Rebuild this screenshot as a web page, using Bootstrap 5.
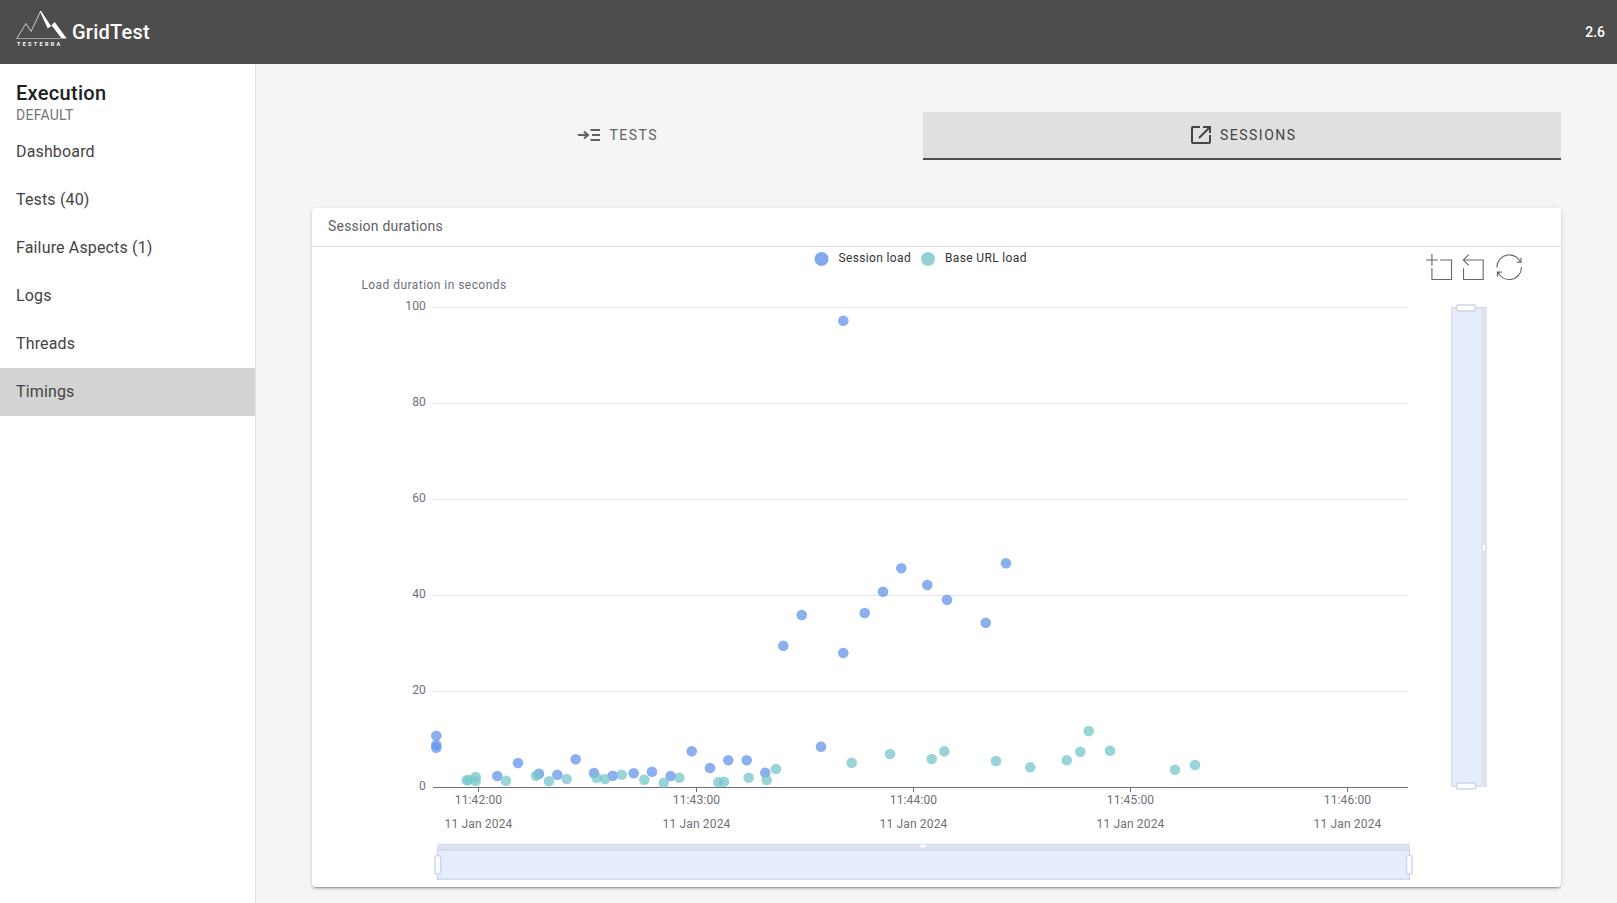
<!DOCTYPE html>
<html lang="en">
  <head>
    <meta charset="UTF-8" />
    <meta name="viewport" content="width=device-width, initial-scale=1.0" />
    <title>GridTest</title>
    <link
      rel="stylesheet"
      href="https://cdn.jsdelivr.net/npm/bootstrap@5.3.0/dist/css/bootstrap.min.css"
    />
    <style>
      body { font-family: Roboto, "Liberation Sans", sans-serif; background: #f5f5f5; height: 903px; overflow: hidden; }
      .top-bar { height: 64px; background: #4d4d4d; padding: 0 12px 0 16px; }
      .brand-name { font-size: 20px; font-weight: 500; color: #fff; line-height: 1; margin-left: 4px; letter-spacing: .25px; }
      .version-no { font-size: 14px; font-weight: 500; color: #fff; }
      .side-menu { width: 256px; background: #fff; border-right: 1px solid #e0e0e0; flex-shrink: 0; }
      .side-title { padding: 17px 16px 0; height: 64px; }
      .side-title h1 { font-size: 20px; font-weight: 500; line-height: 24px; margin: 0; color: #212121; letter-spacing: .3px; }
      .side-title div { font-size: 14px; line-height: 20px; color: #757575; letter-spacing: .25px; }
      .side-link { height: 48px; line-height: 48px; padding: 0 16px; font-size: 16px; color: #444; letter-spacing: .15px; text-decoration: none; display: block; }
      .side-link.on { background: #d3d3d3; }
      .main-area { padding: 48px 56px 16px; min-width: 0; }
      .tab-row { height: 48px; margin-bottom: 48px; }
      .tab-link { height: 48px; display: flex; align-items: center; justify-content: center; gap: 9px; padding: 0 23px 0 25px; font-size: 14px; font-weight: 400; letter-spacing: 1.5px; color: #616161; border-bottom: 2px solid transparent; text-transform: uppercase; }
      .tab-link:hover { color: #616161; }
      .tab-link.active { background: #e0e0e0; color: #444; border-bottom-color: #4d4d4d; padding-left: 27px; }
      .chart-card { height: 679px; border: 0; border-radius: 4px; box-shadow: 0 3px 1px -2px rgba(0,0,0,.2), 0 2px 2px 0 rgba(0,0,0,.14), 0 1px 5px 0 rgba(0,0,0,.12); }
      .chart-card .card-header { height: 39px; background: #fff; border-bottom: 1px solid #e0e0e0; padding: 0 16px; line-height: 36px; font-size: 14px; font-weight: 400; letter-spacing: .2px; color: #616161; }
      .chart-svg { display: block; width: 1249px; height: 640px; }
      .chart-svg text { font-family: Roboto, "Liberation Sans", sans-serif; font-size: 12px; fill: #6e7079; letter-spacing: .15px; }
      .chart-svg text.legend-txt { fill: #333; letter-spacing: .35px; }
      .chart-svg text.axis-name { letter-spacing: .45px; }
      .tool-icon { fill: none; stroke: #666; stroke-width: 1.1px; vector-effect: non-scaling-stroke; }
      .grid-ln { stroke: #e0e6f1; stroke-width: 1; }
      .axis-ln { stroke: #6e7079; stroke-width: 1; }
      .zoom-fill { fill: #e6edfc; }
      .zoom-bar { fill: #dde3f1; }
      .zoom-handle { fill: #fff; stroke: #cdd6ec; stroke-width: 1.5; }
    </style>
  </head>
  <body class="d-flex flex-column">
    <nav class="navbar top-bar flex-nowrap">
      <div class="d-flex align-items-center">
        <svg width="52" height="64" viewBox="16 0 52 64" aria-hidden="true">
          <path d="M16.700 38.500 26 23.500l5 8L40.700 11l10 15.500" fill="none" stroke="#ddd" stroke-width=".9" />
          <path d="M40.700 11l10 15 4-4 12 16.500h-5l-10-13-4 3-8-17.500z" fill="#fff" />
          <path d="M16.500 38.500h50" stroke="#aaa" stroke-width=".9" />
          <text x="17" y="46" font-family="Roboto, sans-serif" font-size="5.500" font-weight="700" letter-spacing="2.300" fill="#fff">TESTERRA</text>
        </svg>
        <span class="brand-name">GridTest</span>
      </div>
      <span class="version-no">2.6</span>
    </nav>
    <div class="d-flex flex-grow-1">
      <aside class="side-menu">
        <div class="side-title">
          <h1>Execution</h1>
          <div>DEFAULT</div>
        </div>
        <a class="side-link" href="#">Dashboard</a>
        <a class="side-link" href="#">Tests (40)</a>
        <a class="side-link" href="#">Failure Aspects (1)</a>
        <a class="side-link" href="#">Logs</a>
        <a class="side-link" href="#">Threads</a>
        <a class="side-link on" href="#">Timings</a>
      </aside>
      <main class="main-area flex-grow-1">
        <ul class="nav nav-fill tab-row">
          <li class="nav-item">
            <a class="nav-link tab-link" href="#">
              <svg width="22" height="12" viewBox="0 0 22 12" aria-hidden="true">
                <path d="M0 6h9M6 2.500 10 6l-4 3.500M12.500 1H22M14 6h8M12.500 11H22" fill="none" stroke="#616161" stroke-width="2" />
              </svg>
              Tests
            </a>
          </li>
          <li class="nav-item">
            <a class="nav-link tab-link active" href="#">
              <svg width="20" height="18" viewBox="0 0 20 18" aria-hidden="true">
                <path d="M9 1H2a1 1 0 0 0-1 1v14a1 1 0 0 0 1 1h16a1 1 0 0 0 1-1V9" fill="none" stroke="#444" stroke-width="2" />
                <path d="M12 1h7v6M19 1 8 12" fill="none" stroke="#444" stroke-width="2" />
              </svg>
              Sessions
            </a>
          </li>
        </ul>
        <div class="card chart-card">
          <div class="card-header">Session durations</div>
          <svg id="chart" class="chart-svg" viewBox="312 247 1249 640">
            <circle cx="821.500" cy="259" r="7" fill="#85a9ee" />
            <text class="legend-txt" x="838.500" y="262">Session load</text>
            <circle cx="928" cy="259" r="7" fill="#92d2d4" />
            <text class="legend-txt" x="945" y="262">Base URL load</text>

            <g transform="translate(1426 254) scale(.44)">
              <path class="tool-icon" d="M0,13.500h26.900 M13.500,26.900V0 M32.100,13.500H58V58H13.500 V32.100" />
            </g>
            <g transform="translate(1459 254) scale(.44)">
              <path class="tool-icon" d="M22,1.400L9.900,13.500l12.300,12.300 M10.300,13.500H54.900v44.600 H10.300v-25.600" />
            </g>
            <g transform="translate(1496 254) scale(.44)">
              <path class="tool-icon" d="M47,18.900h9.800V8.700 M56.300,20.100 C52.100,9,40.500,0.600,26.800,2.100C12.600,3.700,1.600,16.200,2.100,30.600 M13,41.100H3.100v10.200 M3.700,39.900c4.200,11.100,15.800,19.500,29.500,18 c14.200-1.600,25.200-14.100,24.700-28.500" />
            </g>

            <text class="axis-name" x="434" y="289" text-anchor="middle">Load duration in seconds</text>
            <line class="grid-ln" x1="433" x2="1408" y1="307.500" y2="307.500" />
            <line class="grid-ln" x1="433" x2="1408" y1="403.500" y2="403.500" />
            <line class="grid-ln" x1="433" x2="1408" y1="499.500" y2="499.500" />
            <line class="grid-ln" x1="433" x2="1408" y1="595.500" y2="595.500" />
            <line class="grid-ln" x1="433" x2="1408" y1="691.500" y2="691.500" />
            <line class="axis-ln" x1="433" x2="1408" y1="787.500" y2="787.500" />
            <text x="426" y="310" text-anchor="end">100</text>
            <text x="426" y="406" text-anchor="end">80</text>
            <text x="426" y="502" text-anchor="end">60</text>
            <text x="426" y="598" text-anchor="end">40</text>
            <text x="426" y="694" text-anchor="end">20</text>
            <text x="426" y="790" text-anchor="end">0</text>
            <g id="xAxis"></g>
            <g id="dots"></g>

            <!-- vertical data zoom -->
            <rect class="zoom-fill" x="1451" y="307" width="30" height="480" />
            <rect class="zoom-bar" x="1481" y="307" width="6" height="480" />
            <rect x="1451" y="307" width="36" height="1.500" fill="#d2dbee" />
            <rect x="1451" y="785.500" width="30" height="1.500" fill="#d2dbee" />
            <rect x="1451" y="307" width="1" height="480" fill="#d2dbee" />
            <rect x="1483" y="545" width="2" height="5" fill="#fff" />
            <rect class="zoom-handle" x="1456.500" y="305" width="19" height="6" rx="2" />
            <rect class="zoom-handle" x="1456.500" y="783" width="19" height="6" rx="2" />

            <!-- horizontal data zoom -->
            <rect class="zoom-fill" x="437" y="850" width="973" height="30" />
            <rect class="zoom-bar" x="437" y="843.500" width="973" height="6.500" />
            <rect x="437" y="849.500" width="973" height="1.500" fill="#d2dbee" />
            <rect x="437" y="878.500" width="973" height="1.500" fill="#d2dbee" />
            <rect x="437" y="850" width="1" height="30" fill="#c4cee6" />
            <rect x="1409" y="850" width="1" height="30" fill="#c4cee6" />
            <rect x="920.500" y="844.500" width="5" height="3" fill="#fff" />
            <rect class="zoom-handle" x="435" y="855.500" width="5.500" height="18.500" rx="2" />
            <rect class="zoom-handle" x="1406.500" y="855.500" width="5.500" height="18.500" rx="2" />
          </svg>
        </div>
      </main>
    </div>

    <script src="https://cdn.jsdelivr.net/npm/bootstrap@5.3.0/dist/js/bootstrap.bundle.min.js"></script>
    <script>
      const NS = "http://www.w3.org/2000/svg";
      function add(parent, tag, attrs, txt) {
        let el = document.createElementNS(NS, tag);
        for (let k in attrs) el.setAttribute(k, attrs[k]);
        if (txt) el.textContent = txt;
        parent.appendChild(el);
      }

      // x axis ticks, two line labels
      let xAxis = document.getElementById("xAxis");
      [[478.5, "11:42:00"], [696.5, "11:43:00"], [913.5, "11:44:00"], [1130.5, "11:45:00"], [1347.5, "11:46:00"]].forEach(t => {
        add(xAxis, "line", { class: "axis-ln", x1: t[0], x2: t[0], y1: 788, y2: 792 });
        add(xAxis, "text", { x: t[0], y: 804, "text-anchor": "middle" }, t[1]);
        add(xAxis, "text", { x: t[0], y: 828, "text-anchor": "middle" }, "11 Jan 2024");
      });

      const sessionLoad = [
        [436.3,735.7],[436.3,745],[436.3,747.7],[497.3,776],[518,763],[539,773.7],[557.3,774.7],[575.7,759.3],
        [594,773],[612.7,775.7],[633.7,773.3],[652,771.7],[670.7,776],[691.7,751.3],[710,768],[728.3,760.3],
        [746.7,760.3],[765.3,772.7],[821,746.7],[843.3,320.7],[783.3,645.7],[801.7,615],[843.3,653],[864.7,613],
        [883,591.7],[901.3,568.3],[927.3,585],[947,599.7],[985.7,622.7],[1006,563.3]
      ];
      const baseUrlLoad = [
        [466.7,780.3],[468.5,780],[475.7,777],[475.7,781],[506,780.7],[536,775.7],[549,781.3],[566.7,779],
        [596.7,778],[605,779],[621.7,774.7],[644.3,779.7],[663.7,782.7],[679.3,777.7],[718.3,782.3],[724,781.7],
        [748.7,777.7],[766.7,780],[776,769],[851.7,762.7],[890,754],[931.7,759],[944.3,751.3],[996,761],
        [1030.3,767.3],[1066.7,760.3],[1080.3,751.7],[1088.7,731],[1110,750.7],[1175,769.7],[1195,765]
      ];
      let dots = document.getElementById("dots");
      sessionLoad.forEach(p => add(dots, "circle", { cx: p[0], cy: p[1], r: 5.3, fill: "#6694ea", "fill-opacity": .75 }));
      baseUrlLoad.forEach(p => add(dots, "circle", { cx: p[0], cy: p[1], r: 5.3, fill: "#77c7c9", "fill-opacity": .75 }));
    </script>
  </body>
</html>
